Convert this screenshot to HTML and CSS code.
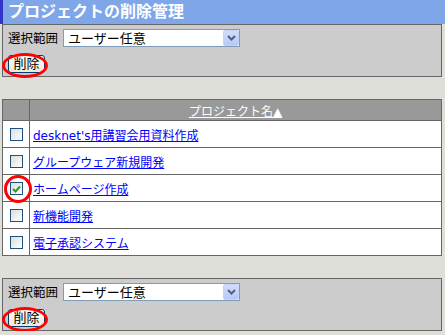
FILE: index.html
```html
<!DOCTYPE html>
<html lang="ja">
<head>
  <meta charset="UTF-8" />
  <title>プロジェクトの削除管理</title>
  <link rel="stylesheet" href="styles.css">
</head>
<body>
  <div class="title">プロジェクトの削除管理</div>

  <div class="wrap">
    <div class="panel">
      <div class="range">
        <span class="label">選択範囲</span>
        <div class="select">
          <span class="select-text">ユーザー任意</span>
          <span class="select-btn">
            <svg width="9" height="6" viewBox="0 0 9 6"><path d="M1 1 L4.5 4.5 L8 1" fill="none" stroke="#4d6185" stroke-width="2"/></svg>
          </span>
        </div>
      </div>
      <div class="action">
        <button class="btn">削除</button>
        <span class="mark mark-btn"></span>
      </div>
    </div>

    <table class="list">
      <tr class="head">
        <th class="col-check"></th>
        <th><a href="#">プロジェクト名▲</a></th>
      </tr>
      <tr>
        <td class="col-check"><span class="check"></span></td>
        <td><a href="#">desknet's用講習会用資料作成</a></td>
      </tr>
      <tr>
        <td class="col-check"><span class="check"></span></td>
        <td><a href="#">グループウェア新規開発</a></td>
      </tr>
      <tr>
        <td class="col-check">
          <span class="check checked">
            <svg width="9" height="8" viewBox="0 0 9 8"><path d="M1 4 L3.5 6.5 L8 1.5" fill="none" stroke="#21a121" stroke-width="2"/></svg>
          </span>
          <span class="mark mark-check"></span>
        </td>
        <td><a href="#">ホームページ作成</a></td>
      </tr>
      <tr>
        <td class="col-check"><span class="check"></span></td>
        <td><a href="#">新機能開発</a></td>
      </tr>
      <tr>
        <td class="col-check"><span class="check"></span></td>
        <td><a href="#">電子承認システム</a></td>
      </tr>
    </table>

    <div class="panel bottom">
      <div class="range">
        <span class="label">選択範囲</span>
        <div class="select">
          <span class="select-text">ユーザー任意</span>
          <span class="select-btn">
            <svg width="9" height="6" viewBox="0 0 9 6"><path d="M1 1 L4.5 4.5 L8 1" fill="none" stroke="#4d6185" stroke-width="2"/></svg>
          </span>
        </div>
      </div>
      <div class="action">
        <button class="btn">削除</button>
        <span class="mark mark-btn"></span>
      </div>
    </div>
  </div>
</body>
</html>
```

FILE: styles.css
```css
body {
  margin: 0;
  background-color: #dfdfd9;
  font-family: "DejaVu Sans", "Noto Sans CJK JP", sans-serif;
  font-size: 12px;
  color: #000;
}

.title {
  height: 24px;
  line-height: 24px;
  background-color: #7ea6e8;
  border-left: 3px solid #2f34c4;
  color: #fff;
  font-size: 16px;
  font-weight: bold;
  padding-left: 5px;
}

.wrap {
  margin: 0 3px 0 2px;
}

.panel {
  background-color: #cccccc;
  border: 1px solid #666;
  padding: 3px 5px 0 5px;
  box-sizing: border-box;
  height: 53px;
}

.bottom {
  margin-top: 22px;
}

.range {
  display: flex;
  align-items: center;
  gap: 5px;
}

.label {
  font-size: 12.5px;
}

.select {
  display: flex;
  align-items: center;
  justify-content: space-between;
  width: 177px;
  height: 18px;
  box-sizing: border-box;
  border: 1px solid #7f9db9;
  background: #fff;
}

.select-text {
  font-size: 13px;
  padding-left: 4px;
}

.select-btn {
  display: flex;
  align-items: center;
  justify-content: center;
  width: 16px;
  height: 16px;
  box-sizing: border-box;
  border: 1px solid #c4d3f7;
  border-radius: 2px;
  background: linear-gradient(#d2ddfb, #b7c9f6);
}

.action {
  position: relative;
  margin-top: 8px;
  width: 37px;
}

.btn {
  display: block;
  width: 37px;
  height: 18px;
  padding: 0;
  font-family: inherit;
  font-size: 13px;
  line-height: 16px;
  border: 1px solid #003c74;
  border-radius: 3px;
  background: linear-gradient(#ffffff, #ece9d8);
  color: #000;
}

.mark {
  position: absolute;
  border: 3px solid #f00;
  border-radius: 50%;
  box-sizing: border-box;
  pointer-events: none;
}

.mark-btn {
  left: -6px;
  top: -2px;
  width: 46px;
  height: 25px;
}

.list {
  margin-top: 22px;
  width: 100%;
  border-collapse: collapse;
  border: 1px solid #666;
  background: #fff;
}

.list th,
.list td {
  border: 1px solid #666;
  padding: 0;
}

.head th {
  height: 20px;
  background: #999;
  font-weight: normal;
  text-align: center;
}

.head a {
  color: #fff;
}

.list td {
  height: 26px;
  padding-left: 3px;
}

.list td a {
  color: #0000ff;
  font-size: 12px;
}

.list .col-check {
  width: 26px;
  padding: 0;
  text-align: center;
  position: relative;
}

.check {
  display: inline-flex;
  align-items: center;
  justify-content: center;
  width: 13px;
  height: 13px;
  box-sizing: border-box;
  border: 1px solid #1c5180;
  background: linear-gradient(135deg, #dcdcd7, #ffffff);
  vertical-align: middle;
}

.mark-check {
  left: 1px;
  top: 0;
  width: 28px;
  height: 28px;
}
```
